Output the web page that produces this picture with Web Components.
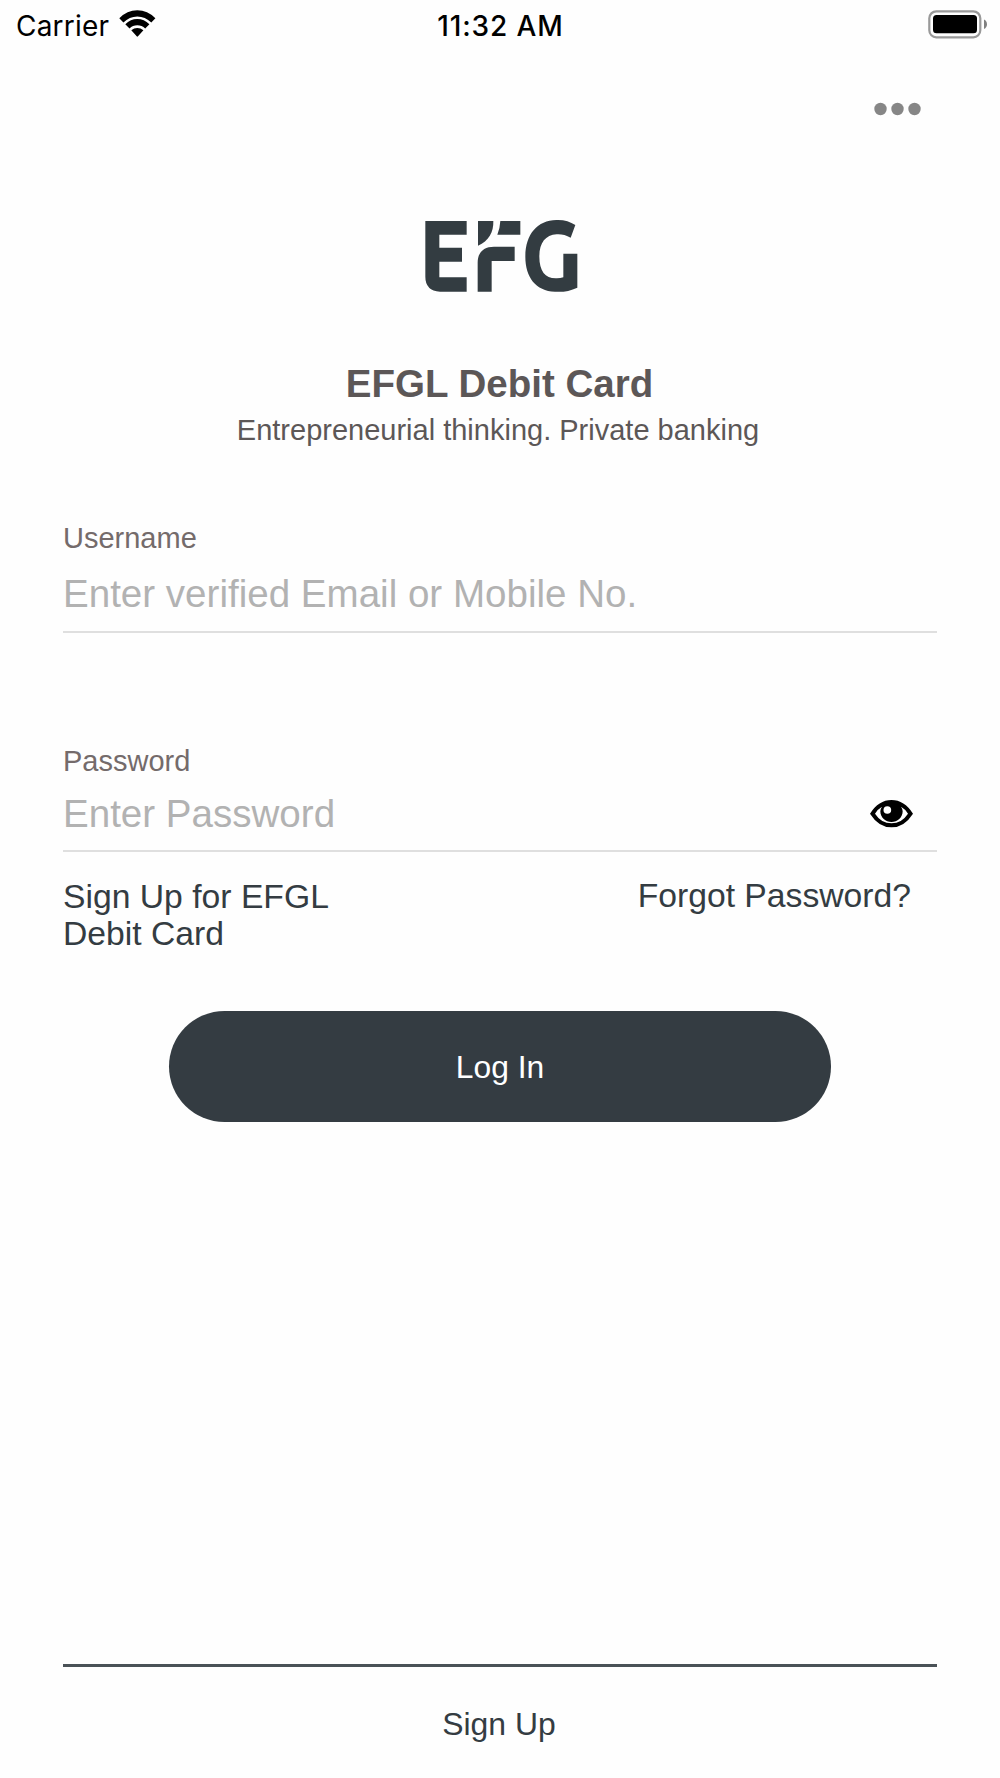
<!DOCTYPE html>
<html lang="en">
<head>
<meta charset="UTF-8">
<title>EFGL Debit Card</title>
<style>
  body {
    margin: 0;
    background: #fefefe;
    font-family: "Liberation Sans", Arial, sans-serif;
  }
</style>
</head>
<body>
<login-screen></login-screen>

<script>
class StatusBar extends HTMLElement {
  connectedCallback() {
    this.attachShadow({ mode: "open" });
    this.shadowRoot.innerHTML = `
      <style>
        :host {
          display: grid;
          grid-template-columns: 1fr auto 1fr;
          height: 51px;
          padding: 0 13px 0 16px;
          box-sizing: border-box;
          font: 400 28px/53px Inter, sans-serif;
          color: #000;
        }
        .carrier {
          display: flex;
          gap: 10px;
          letter-spacing: 0.2px;
        }
        .carrier svg {
          margin-top: 10px;
        }
        .time {
          font-weight: 500;
          letter-spacing: 0.9px;
          padding-right: 2px;
        }
        .battery {
          justify-self: end;
          margin-top: 10px;
        }
        svg {
          display: block;
        }
      </style>
      <div class="carrier">
        <span><slot name="carrier"></slot></span>
        <svg width="37" height="28" viewBox="0 0 37 28">
          <path d="M.3 8.200Q8 .2 18.300.2T36.400 8.200L32.300 12.500Q26.200 6.500 18.300 6.500T4.400 12.500Z"/>
          <path d="M6.300 14.300Q11.500 9 18.300 9T30.400 14.300L26.200 18.500Q22.900 15.200 18.300 15.200T10.500 18.500Z"/>
          <path d="M12.300 20.300Q15 17.900 18.300 17.900T24.400 20.300L19 26.300Q18.300 27 17.700 26.300Z"/>
        </svg>
      </div>
      <div class="time"><slot name="time"></slot></div>
      <svg class="battery" width="59" height="29" viewBox="0 0 59 29">
        <rect x="1.300" y="1.300" width="51" height="26" rx="7" fill="none" stroke="#999" stroke-width="2.200"/>
        <rect x="5" y="5" width="44" height="18.300" rx="3.500"/>
        <path d="M56 9.500Q59 11 59 14.200T56 19Z" fill="#808080"/>
      </svg>
    `;
  }
}

class MoreMenu extends HTMLElement {
  connectedCallback() {
    this.attachShadow({ mode: "open" });
    this.shadowRoot.innerHTML = `
      <style>
        :host {
          display: flex;
          justify-content: flex-end;
          height: 159px;
          padding: 51px 79px 0 0;
          box-sizing: border-box;
        }
      </style>
      <svg width="47" height="14" viewBox="0 0 47 14" fill="#868686">
        <circle cx="6.500" cy="7" r="6.200"/>
        <circle cx="23.500" cy="7" r="6.200"/>
        <circle cx="40.500" cy="7" r="6.200"/>
      </svg>
    `;
  }
}

class BrandHeader extends HTMLElement {
  connectedCallback() {
    this.attachShadow({ mode: "open" });
    this.shadowRoot.innerHTML = `
      <style>
        :host {
          display: flex;
          flex-direction: column;
          align-items: center;
          color: #5c5757;
        }
        h1 {
          margin: 61px 0 0;
          padding-right: 1px;
          font-size: 38.5px;
          line-height: 46px;
        }
        p {
          margin: 6px 0 0;
          padding-right: 4px;
          font-size: 29px;
          line-height: 34px;
        }
      </style>
      <svg width="180" height="90" viewBox="0 0 540 270" fill="#333c41">
        <path d="M46 33H170V74H88V113H156V155H88V202H170V245H90Q46 242 46 200Z"/>
        <path d="M204 33H250C251 66 236 94 204 107Z"/>
        <path d="M271 33H331V74H262Q270 54 271 33Z"/>
        <path d="M314 110V153H245V245H203V158C203 126 222 110 252 110Z"/>
        <path d="M496 45L482 83C468 75 453 72 440 73C406 75 388 99 388 140C388 184 407 207 441 205Q451 205 460 202V131H502V233C480 243 458 247 435 245C377 243 346 201 346 140C346 73 382 31 439 30C462 29 480 35 496 45Z"/>
      </svg>
      <h1><slot name="title"></slot></h1>
      <p><slot name="tagline"></slot></p>
    `;
  }
}

class TextField extends HTMLElement {
  connectedCallback() {
    this.attachShadow({ mode: "open" });
    this.shadowRoot.innerHTML = `
      <style>
        :host {
          display: block;
          border-bottom: 2px solid #dfdfdf;
        }
        .label {
          font-size: 29px;
          line-height: 34px;
          color: #746b6b;
        }
        .input {
          display: flex;
          align-items: center;
          justify-content: space-between;
          padding: var(--pad-top, 16px) 24px var(--pad-bottom, 14px) 0;
          font-size: 38.55px;
          line-height: 46px;
          color: #b2b2b2;
        }
      </style>
      <div class="label"><slot name="label"></slot></div>
      <div class="input"><slot></slot><slot name="icon"></slot></div>
    `;
  }
}

class EyeIcon extends HTMLElement {
  connectedCallback() {
    this.attachShadow({ mode: "open" });
    this.shadowRoot.innerHTML = `
      <style>
        :host {
          display: block;
          line-height: 0;
        }
      </style>
      <svg width="43" height="28" viewBox="0 0 129 84">
        <path fill-rule="evenodd" d="M0 41Q26 0 64.500 0T129 41Q103 82 64.500 82T0 41ZM15 41Q34 70 64.500 70T114 41Q107 28 93 20Q98 27 98 34C98 53 82 66 64.500 66S31 53 31 34Q31 27 36 20Q22 28 15 41Z"/>
        <circle cx="52" cy="30" r="11.500" fill="#fff"/>
      </svg>
    `;
  }
}

class PillButton extends HTMLElement {
  connectedCallback() {
    this.attachShadow({ mode: "open" });
    this.shadowRoot.innerHTML = `
      <style>
        :host {
          display: block;
        }
        button {
          display: block;
          width: 100%;
          height: 111.500px;
          padding: 2px 0 0;
          border: 0;
          border-radius: 56px;
          background: #343c42;
          color: #fff;
          font: 31.800px "Liberation Sans", Arial, sans-serif;
        }
      </style>
      <button><slot></slot></button>
    `;
  }
}

class ScreenFooter extends HTMLElement {
  connectedCallback() {
    this.attachShadow({ mode: "open" });
    this.shadowRoot.innerHTML = `
      <style>
        :host {
          display: block;
          height: 114px;
          padding: 37px 2px 0 0;
          box-sizing: border-box;
          border-top: 3px solid #4a5257;
          text-align: center;
          font-size: 31.900px;
          line-height: 40px;
          color: #343c42;
        }
      </style>
      <slot></slot>
    `;
  }
}

class LoginScreen extends HTMLElement {
  connectedCallback() {
    this.attachShadow({ mode: "open" });
    this.shadowRoot.innerHTML = `
      <style>
        :host {
          display: flex;
          flex-direction: column;
          width: 1000px;
          height: 1778px;
          overflow: hidden;
        }
        text-field {
          margin: 74px 63px 0;
        }
        .password {
          --pad-top: 13px;
          --pad-bottom: 13px;
          margin-top: 111px;
        }
        .links {
          display: flex;
          justify-content: space-between;
          margin: 25px 89px 0 63px;
          font-size: 33.700px;
          line-height: 37px;
          color: #343c42;
        }
        .signup {
          width: 280px;
          padding-top: 0.500px;
        }
        pill-button {
          margin: 59px 169px 0;
        }
        screen-footer {
          margin: auto 63px 0;
        }
      </style>
      <status-bar>
        <span slot="carrier">Carrier</span>
        <span slot="time">11:32 AM</span>
      </status-bar>
      <more-menu></more-menu>
      <brand-header>
        <span slot="title">EFGL Debit Card</span>
        <span slot="tagline">Entrepreneurial thinking. Private banking</span>
      </brand-header>
      <text-field>
        <span slot="label">Username</span>
        <span>Enter verified Email or Mobile No.</span>
      </text-field>
      <text-field class="password">
        <span slot="label">Password</span>
        <span>Enter Password</span>
        <eye-icon slot="icon"></eye-icon>
      </text-field>
      <div class="links">
        <span class="signup">Sign Up for EFGL Debit Card</span>
        <span>Forgot Password?</span>
      </div>
      <pill-button>Log In</pill-button>
      <screen-footer>Sign Up</screen-footer>
    `;
  }
}

customElements.define("status-bar", StatusBar);
customElements.define("more-menu", MoreMenu);
customElements.define("brand-header", BrandHeader);
customElements.define("text-field", TextField);
customElements.define("eye-icon", EyeIcon);
customElements.define("pill-button", PillButton);
customElements.define("screen-footer", ScreenFooter);
customElements.define("login-screen", LoginScreen);
</script>
</body>
</html>
